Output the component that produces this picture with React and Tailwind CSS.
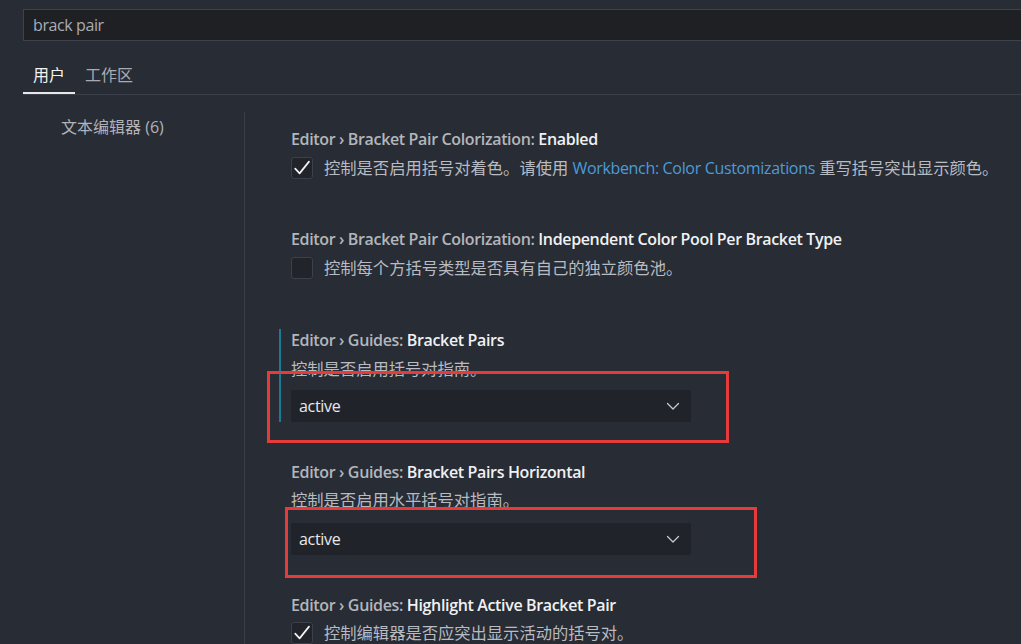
import React from "react";

const FONT = { fontFamily: '"Segoe UI","Open Sans","Noto Sans CJK SC",sans-serif' };

function Check() {
  return (
    <div className="w-[22px] h-[22px] shrink-0 rounded-[3px] bg-[#22242b] border border-[#3c4049] flex items-center justify-center">
      <svg width="18" height="18" viewBox="0 0 18 18" fill="none">
        <path d="M2.2 9.6 L6.6 14.4 L16 2.6" stroke="#f4f4f4" strokeWidth="1.7" strokeLinecap="round" strokeLinejoin="round" />
      </svg>
    </div>
  );
}

function Empty() {
  return <div className="w-[22px] h-[22px] shrink-0 rounded-[3px] bg-[#22242b] border border-[#3c4049]" />;
}

function Title({ prefix, name }) {
  return (
    <div className="h-[22px] leading-[22px] text-[16px] tracking-[-0.35px] font-semibold whitespace-nowrap">
      <span className="text-[#b3b6bc]">{prefix}</span>
      <span className="text-[#f0f1f3]">{name}</span>
    </div>
  );
}

function Select() {
  return (
    <div className="w-[400px] h-[32px] rounded-[2px] bg-[#21232a] flex items-center justify-between pl-[8px] pr-[10px]">
      <span className="text-[16px] tracking-[-0.3px] text-[#e8e8e8]">active</span>
      <svg width="16" height="16" viewBox="0 0 16 16" fill="none">
        <path d="M2.5 5.5 L8 11 L13.5 5.5" stroke="#c8c8c8" strokeWidth="1.3" strokeLinecap="round" strokeLinejoin="round" />
      </svg>
    </div>
  );
}

export default function App() {
  return (
    <div className="relative w-[1021px] h-[644px] overflow-hidden bg-[#282c35] text-[16px]" style={FONT}>
      <div className="pt-[9px] pl-[23px]">
        <div className="w-[1010px] h-[32px] bg-[#1f2023] border border-[#3d4150] flex items-center pl-[9px]">
          <span className="text-[16px] tracking-[-0.4px] text-[#a9adb5]">brack pair</span>
        </div>
      </div>
      <div className="ml-[23px] mt-[19px] flex border-b border-[#3b3f49] h-[35px]">
        <div className="px-[10px] h-[34px] border-b-2 border-[#e8e8e8] leading-[30px] text-[#f2f2f2]">用户</div>
        <div className="px-[10px] h-[34px] leading-[30px] text-[#a8abb1]">工作区</div>
      </div>
      <div className="flex">
        <div className="w-[221px] ml-[23px] pt-[21px] pl-[38px]">
          <div className="leading-[22px] text-[#b0b3b9] whitespace-nowrap">文本编辑器 (6)</div>
        </div>
        <div className="mt-[17px] w-px h-[600px] bg-[#3a3e47]" />
        <div className="pt-[33px] flex flex-col text-[16.3px]">
          <div className="ml-[34px] border-l-2 border-transparent pl-[10px] flex flex-col gap-[7px] mb-[49px]">
            <Title prefix="Editor › Bracket Pair Colorization: " name="Enabled" />
            <div className="flex items-center gap-[11px] h-[22px] whitespace-nowrap text-[#b8bbc1]">
              <Check />
              <span>
                控制是否启用括号对着色。请使用 <span className="text-[16px] text-[#4d9bd8] tracking-[-0.33px]">Workbench: Color Customizations</span> 重写括号突出显示颜色。
              </span>
            </div>
          </div>
          <div className="ml-[34px] border-l-2 border-transparent pl-[10px] flex flex-col gap-[7px] mb-[50px]">
            <Title prefix="Editor › Bracket Pair Colorization: " name="Independent Color Pool Per Bracket Type" />
            <div className="flex items-center gap-[11px] h-[22px] whitespace-nowrap text-[#b8bbc1]">
              <Empty />
              <span>控制每个方括号类型是否具有自己的独立颜色池。</span>
            </div>
          </div>
          <div className="ml-[34px] border-l-2 border-[#1a7b98] pl-[10px] flex flex-col mb-[39px]">
            <Title prefix="Editor › Guides: " name="Bracket Pairs" />
            <div className="mt-[7px] h-[22px] leading-[22px] text-[#b8bbc1] whitespace-nowrap">控制是否启用括号对指南。</div>
            <div className="mt-[10px]"><Select /></div>
          </div>
          <div className="ml-[34px] border-l-2 border-transparent pl-[10px] flex flex-col mb-[39px]">
            <Title prefix="Editor › Guides: " name="Bracket Pairs Horizontal" />
            <div className="mt-[6px] h-[22px] leading-[22px] text-[#b8bbc1] whitespace-nowrap">控制是否启用水平括号对指南。</div>
            <div className="mt-[12px]"><Select /></div>
          </div>
          <div className="ml-[34px] border-l-2 border-transparent pl-[10px] flex flex-col gap-[6px]">
            <Title prefix="Editor › Guides: " name="Highlight Active Bracket Pair" />
            <div className="flex items-center gap-[11px] h-[22px] whitespace-nowrap text-[#b8bbc1]">
              <Check />
              <span>控制编辑器是否应突出显示活动的括号对。</span>
            </div>
          </div>
        </div>
      </div>
      <div className="absolute left-[267px] top-[371px] w-[462px] h-[72px] border-[3px] border-[#e53b3b]" />
      <div className="absolute left-[285px] top-[507px] w-[472px] h-[71px] border-[3px] border-[#e53b3b]" />
    </div>
  );
}
